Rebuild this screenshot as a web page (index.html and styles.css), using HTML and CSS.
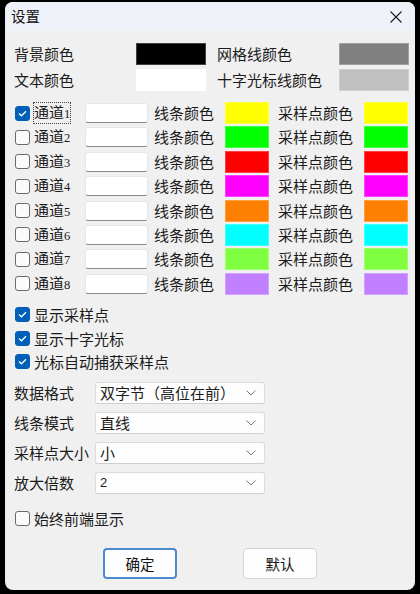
FILE: index.html
```
<!DOCTYPE html>
<html lang="zh">
<head>
<meta charset="utf-8">
<title>设置</title>
<link rel="stylesheet" href="styles.css">
</head>
<body>
<div class="dialog">
  <div class="titlebar">
    <span class="title">设置</span>
    <svg class="close" width="12" height="12" viewBox="0 0 12 12"><path d="M0.5 0.5 L11.5 11.5 M11.5 0.5 L0.5 11.5" stroke="#1a1a1a" stroke-width="1.1" fill="none"/></svg>
  </div>
  <div class="content">
    <div class="topgrid">
      <span class="lbl">背景颜色</span><span class="sw" style="background:#000000"></span><span></span>
      <span class="lbl">网格线颜色</span><span class="sw" style="background:#808080"></span>
      <span class="lbl">文本颜色</span><span class="sw" style="background:#ffffff"></span><span></span>
      <span class="lbl">十字光标线颜色</span><span class="sw" style="background:#c0c0c0"></span>
    </div>

    <div class="chgrid">
      <label class="ch"><span class="cb on"><svg width="9" height="7" viewBox="0 0 9 7"><path d="M1 3.6 L3.4 5.8 L8 1.2" stroke="#fff" stroke-width="1.3" fill="none"/></svg></span><span class="chname focus">通道<span class="num">1</span></span></label>
      <span class="inp"></span><span class="lbl">线条颜色</span><span class="sw" style="background:#ffff00"></span><span class="lbl">采样点颜色</span><span class="sw" style="background:#ffff00"></span>

      <label class="ch"><span class="cb"></span><span class="chname">通道<span class="num">2</span></span></label>
      <span class="inp"></span><span class="lbl">线条颜色</span><span class="sw" style="background:#00ff00"></span><span class="lbl">采样点颜色</span><span class="sw" style="background:#00ff00"></span>

      <label class="ch"><span class="cb"></span><span class="chname">通道<span class="num">3</span></span></label>
      <span class="inp"></span><span class="lbl">线条颜色</span><span class="sw" style="background:#ff0000"></span><span class="lbl">采样点颜色</span><span class="sw" style="background:#ff0000"></span>

      <label class="ch"><span class="cb"></span><span class="chname">通道<span class="num">4</span></span></label>
      <span class="inp"></span><span class="lbl">线条颜色</span><span class="sw" style="background:#ff00ff"></span><span class="lbl">采样点颜色</span><span class="sw" style="background:#ff00ff"></span>

      <label class="ch"><span class="cb"></span><span class="chname">通道<span class="num">5</span></span></label>
      <span class="inp"></span><span class="lbl">线条颜色</span><span class="sw" style="background:#ff8000"></span><span class="lbl">采样点颜色</span><span class="sw" style="background:#ff8000"></span>

      <label class="ch"><span class="cb"></span><span class="chname">通道<span class="num">6</span></span></label>
      <span class="inp"></span><span class="lbl">线条颜色</span><span class="sw" style="background:#00ffff"></span><span class="lbl">采样点颜色</span><span class="sw" style="background:#00ffff"></span>

      <label class="ch"><span class="cb"></span><span class="chname">通道<span class="num">7</span></span></label>
      <span class="inp"></span><span class="lbl">线条颜色</span><span class="sw" style="background:#80ff40"></span><span class="lbl">采样点颜色</span><span class="sw" style="background:#80ff40"></span>

      <label class="ch"><span class="cb"></span><span class="chname">通道<span class="num">8</span></span></label>
      <span class="inp"></span><span class="lbl">线条颜色</span><span class="sw" style="background:#c080ff"></span><span class="lbl">采样点颜色</span><span class="sw" style="background:#c080ff"></span>
    </div>

    <div class="checks">
      <label class="chk"><span class="cb on"><svg width="9" height="7" viewBox="0 0 9 7"><path d="M1 3.6 L3.4 5.8 L8 1.2" stroke="#fff" stroke-width="1.3" fill="none"/></svg></span>显示采样点</label>
      <label class="chk"><span class="cb on"><svg width="9" height="7" viewBox="0 0 9 7"><path d="M1 3.6 L3.4 5.8 L8 1.2" stroke="#fff" stroke-width="1.3" fill="none"/></svg></span>显示十字光标</label>
      <label class="chk"><span class="cb on"><svg width="9" height="7" viewBox="0 0 9 7"><path d="M1 3.6 L3.4 5.8 L8 1.2" stroke="#fff" stroke-width="1.3" fill="none"/></svg></span>光标自动捕获采样点</label>
    </div>

    <div class="combos">
      <span class="lbl">数据格式</span>
      <div class="combo"><span>双字节（高位在前）</span><svg width="10" height="6" viewBox="0 0 10 6"><path d="M0.5 0.5 L5 5 L9.5 0.5" stroke="#7a7a7a" stroke-width="1" fill="none"/></svg></div>
      <span class="lbl">线条模式</span>
      <div class="combo"><span>直线</span><svg width="10" height="6" viewBox="0 0 10 6"><path d="M0.5 0.5 L5 5 L9.5 0.5" stroke="#7a7a7a" stroke-width="1" fill="none"/></svg></div>
      <span class="lbl">采样点大小</span>
      <div class="combo"><span>小</span><svg width="10" height="6" viewBox="0 0 10 6"><path d="M0.5 0.5 L5 5 L9.5 0.5" stroke="#7a7a7a" stroke-width="1" fill="none"/></svg></div>
      <span class="lbl">放大倍数</span>
      <div class="combo"><span class="lat">2</span><svg width="10" height="6" viewBox="0 0 10 6"><path d="M0.5 0.5 L5 5 L9.5 0.5" stroke="#7a7a7a" stroke-width="1" fill="none"/></svg></div>
    </div>

    <label class="chk topmost"><span class="cb"></span>始终前端显示</label>

    <div class="buttons">
      <button class="btn primary">确定</button>
      <button class="btn">默认</button>
    </div>
  </div>
</div>
</body>
</html>
```

FILE: styles.css
```
html, body {
  margin: 0;
  padding: 0;
  background: #000;
}
body {
  width: 420px;
  height: 594px;
  overflow: hidden;
  font-family: "Noto Sans CJK SC", "Noto Sans", sans-serif;
  font-size: 15px;
  color: #1b1b1b;
}
.dialog {
  margin: 2px 0 0 5px;
  width: 410px;
  height: 588px;
  background: #f0f0f0;
  border-radius: 8px;
  overflow: hidden;
}
.titlebar {
  height: 28px;
  background: #eef2f8;
  display: flex;
  align-items: center;
  justify-content: space-between;
  padding: 0 13px 0 6px;
}
.title {
  font-size: 14.5px;
  line-height: 28px;
  color: #111;
}
.close {
  display: block;
  margin-top: 2px;
}
.content {
  padding: 0 6px 0 9px;
}
.lbl {
  line-height: 22px;
  white-space: nowrap;
}
.sw {
  display: block;
  height: 22px;
}
.topgrid {
  margin-top: 13px;
  display: grid;
  grid-template-columns: 122px 70px 11px 122px 70px;
  grid-auto-rows: 22px;
  row-gap: 4px;
}
.chgrid {
  margin-top: 11px;
  display: grid;
  grid-template-columns: 71px 63px 6px 71px 44px 9px 86px 44px;
  grid-auto-rows: 22px;
  row-gap: 2.4px;
}
.chgrid .inp { grid-column: 2; }
.chgrid .inp + .lbl { grid-column: 4; }
.chgrid .sw + .lbl { grid-column: 7; }
.sw {
  box-shadow: inset 0 0 0 1px rgba(255,255,255,0.25);
}
.inp {
  display: block;
  align-self: center;
  height: 20px;
  box-sizing: border-box;
  background: #fff;
  border: 1px solid #e6e6e6;
  border-bottom: 1px solid #8a8a8a;
  border-radius: 3px;
}
.ch, .chk {
  display: flex;
  align-items: center;
  white-space: nowrap;
}
.cb {
  box-sizing: border-box;
  width: 15px;
  height: 15px;
  margin-left: 1px;
  margin-right: 4px;
  border: 1px solid #6b6b6b;
  border-radius: 3px;
  background: #fbfbfb;
  display: flex;
  align-items: center;
  justify-content: center;
  flex: none;
}
.ch .cb {
  margin-right: 3px;
}
.cb.on {
  background: #005fb8;
  border-color: #005fb8;
}
.cb svg { display: block; }
.chname {
  line-height: 18px;
  padding: 0;
  border: 1px dotted transparent;
}
.chname.focus {
  border-color: #444;
}
.num {
  font-family: "Liberation Serif", serif;
  font-size: 12.5px;
}
.checks {
  margin-top: 8.5px;
  display: flex;
  flex-direction: column;
}
.checks .chk {
  height: 23.5px;
}
.combos {
  margin-top: 8px;
  display: grid;
  grid-template-columns: 81px 170px;
  grid-auto-rows: 22px;
  row-gap: 8px;
}
.combo {
  box-sizing: border-box;
  height: 22px;
  background: #fdfdfd;
  border: 1px solid #dcdcdc;
  border-bottom-color: #cfcfcf;
  border-radius: 3px;
  display: flex;
  align-items: center;
  justify-content: space-between;
  padding: 0 8px 0 4px;
}
.combo span { line-height: 20px; }
.combo .lat {
  font-family: "Liberation Sans", sans-serif;
  font-size: 13px;
}
.combo svg { display: block; }
.topmost {
  margin-top: 14px;
  height: 22px;
}
.buttons {
  margin-top: 18px;
  display: flex;
  justify-content: center;
  gap: 66px;
  margin-left: -9px;
  margin-right: -6px;
}
.btn {
  box-sizing: border-box;
  width: 74px;
  height: 31px;
  background: #fdfdfd;
  border: 1px solid #d3d3d3;
  border-radius: 4px;
  font-family: "Noto Sans CJK SC", sans-serif;
  font-size: 14.5px;
  color: #111;
  padding: 0;
}
.btn.primary {
  border: 2px solid #4a8bd0;
}
```
